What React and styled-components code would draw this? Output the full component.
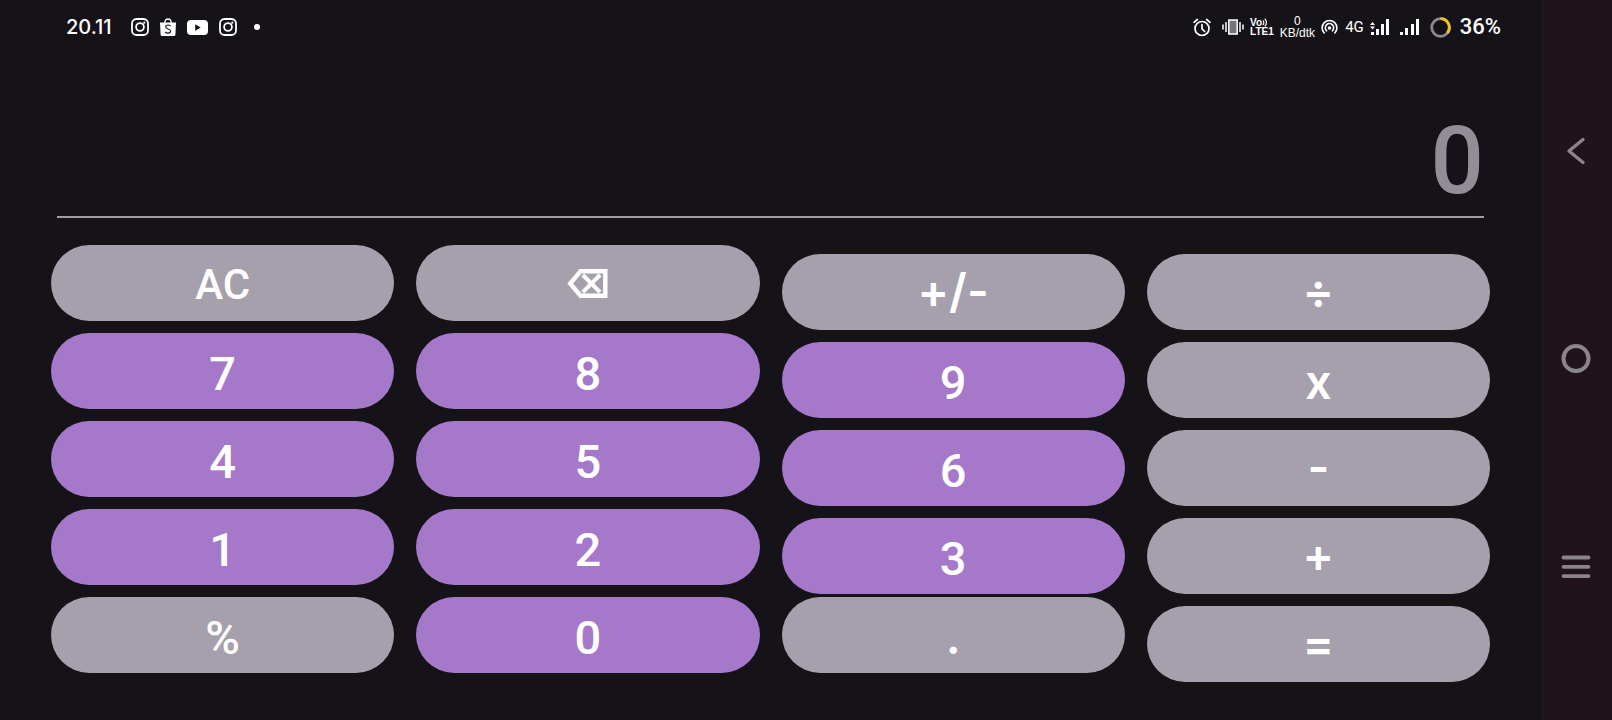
import React, { useState } from "react";
import styled, { createGlobalStyle } from "styled-components";

const GlobalStyle = createGlobalStyle`
  *, *::before, *::after { box-sizing: border-box; }
  body {
    margin: 0;
    background: #151218;
    color: #fff;
    font-family: Roboto, "Liberation Sans", sans-serif;
  }
`;

const Screen = styled.div`
  display: flex;
  min-height: 100vh;
`;

const Calculator = styled.main`
  flex: 1;
  min-width: 0;
  display: flex;
  flex-direction: column;
`;

const StatusBar = styled.header`
  display: flex;
  align-items: center;
  justify-content: space-between;
  height: 54px;
  padding: 0 40px 0 66px;

  svg { display: block; flex: none; }
`;

const StatusGroup = styled.div`
  display: flex;
  align-items: center;
  gap: ${(p) => p.$gap}px;
`;

const Clock = styled.time`
  margin-right: 8px;
  font: 500 20px/24px Inter, sans-serif;
`;

const Battery = styled.span`
  font-size: 22px;
  font-weight: 500;
  line-height: 24px;
`;

const NetworkType = styled.span`
  font-size: 15px;
  line-height: 24px;
`;

const Stack = styled.span`
  display: flex;
  flex-direction: column;
  align-items: ${(p) => p.$align || "center"};
  font-family: "Liberation Sans", sans-serif;
  font-size: ${(p) => p.$size}px;
  line-height: ${(p) => p.$line}px;
  font-weight: ${(p) => p.$weight || 400};
`;

const Voice = styled.span`
  display: flex;
  align-items: center;
`;

const Display = styled.input`
  height: 164px;
  margin: 0 57px;
  padding: 52px 0 0;
  border: 0;
  border-bottom: 2px solid #a09da3;
  border-radius: 0;
  outline: 0;
  background: transparent;
  color: #938d97;
  font: 500 94px/108px Roboto, sans-serif;
  text-align: right;
`;

const Keypad = styled.section`
  display: grid;
  grid-template-columns: repeat(4, 1fr);
  gap: 22px;
  padding: 27px 51px 36px;
`;

const KeyColumn = styled.div`
  display: flex;
  flex-direction: column;
  gap: 12px;
  padding-top: ${(p) => (p.$lowered ? 9 : 0)}px;
`;

const faces = {
  digit: { font: "500 47px/56px Roboto, sans-serif", padding: "6px 0 0" },
  symbol: { font: "600 47px/56px Inter, sans-serif", padding: "0 0 2px" },
  letter: { font: "600 47px/56px Inter, sans-serif", padding: "4px 0 0" },
  label: { font: "500 42px/56px Roboto, sans-serif", padding: "4px 0 0" },
  icon: { font: "500 47px/56px Roboto, sans-serif", padding: "0" },
};

const Key = styled.button`
  display: flex;
  align-items: center;
  justify-content: center;
  height: 76px;
  margin: ${(p) => (p.$raised ? "-9px" : "0")} 0 0;
  padding: ${(p) => faces[p.$face].padding};
  border: 0;
  border-radius: 38px;
  background: ${(p) => (p.$accent ? "#a678ca" : "#a6a0ac")};
  color: #fff;
  font: ${(p) => faces[p.$face].font};
  cursor: pointer;
`;

const NavRail = styled.nav`
  flex: none;
  display: flex;
  flex-direction: column;
  width: 71px;
  padding: 47px 2px 49px 0;
  background: #20131c;
`;

const NavButton = styled.button`
  flex: 1;
  display: flex;
  align-items: center;
  justify-content: center;
  padding: 0;
  border: 0;
  background: transparent;
  color: #8b8488;
  cursor: pointer;
`;

const Instagram = () => (
  <svg width="18" height="18" viewBox="0 0 18 18" fill="none" stroke="#fff" strokeWidth="1.8" aria-hidden="true">
    <rect x="1" y="1" width="16" height="16" rx="4.5" />
    <circle cx="9" cy="9" r="3.9" />
    <circle cx="13.3" cy="4.7" r="1.1" fill="#fff" stroke="none" />
  </svg>
);

const Shop = () => (
  <svg width="16" height="18" viewBox="0 0 16 18" fill="none" aria-hidden="true">
    <path d="M4.8 5C4.8 2.4 6.2 1 8 1s3.2 1.4 3.2 4" stroke="#fff" strokeWidth="1.3" />
    <path d="M0 4.5h16l-.6 12a1.5 1.5 0 0 1-1.5 1.5H2.1a1.5 1.5 0 0 1-1.5-1.5z" fill="#fff" />
    <path d="M10.5 8C9.7 7.2 8.8 7 8 7c-1.4 0-2.3.7-2.3 1.8 0 2.5 4.9 1.7 4.9 4.3 0 1.2-1.1 2-2.5 2-1.2 0-2.2-.4-2.9-1.1" stroke="#151218" strokeWidth="1.1" />
  </svg>
);

const Video = () => (
  <svg width="21" height="15" viewBox="0 0 21 15" aria-hidden="true">
    <rect width="21" height="15" rx="4" fill="#fff" />
    <path d="M8.2 4.3v6.4l5.5-3.2z" fill="#151218" />
  </svg>
);

const Dot = () => (
  <svg width="16" height="6" viewBox="0 0 16 6" aria-hidden="true">
    <circle cx="9" cy="3" r="3" fill="#fff" />
  </svg>
);

const Alarm = () => (
  <svg width="23" height="19" viewBox="0 0 23 19" fill="none" stroke="#fff" strokeWidth="1.7" strokeLinecap="round" aria-hidden="true">
    <circle cx="9" cy="10.5" r="7" />
    <path d="M9 6.5v4.3l2.6 2.6M1 4.3l3.3-2.8M17 4.3l-3.3-2.8" />
  </svg>
);

const Vibrate = () => (
  <svg width="22" height="16" viewBox="0 0 22 16" fill="none" stroke="#fff" strokeWidth="1.5" aria-hidden="true">
    <rect x="6.8" y="1" width="8.4" height="14" fill="#77747a" />
    <path d="M4 3v10M18 3v10M1 5.5v5M21 5.5v5" />
  </svg>
);

const VoiceWaves = () => (
  <svg width="6" height="9" viewBox="0 0 6 9" fill="none" stroke="#fff" strokeWidth="1.2" aria-hidden="true">
    <path d="M.8 2.5a3 3 0 0 1 0 4.5M2.8.7a5.3 5.3 0 0 1 0 7.6" />
  </svg>
);

const Hotspot = () => (
  <svg width="18" height="16" viewBox="0 0 18 16" fill="none" stroke="#fff" strokeWidth="1.6" strokeLinecap="round" aria-hidden="true">
    <path d="M3.2 14a7.4 7.4 0 1 1 10.6 0M5.6 11.8a4.2 4.2 0 1 1 5.8 0" />
    <circle cx="8.5" cy="9" r="1.8" fill="#fff" stroke="none" />
  </svg>
);

const Signal = ({ data }) => (
  <svg width="24" height="18" viewBox="0 0 24 18" fill="#fff" aria-hidden="true">
    <path d={data ? "M1 14h3v3H1zM6 11h3v6H6zM11 6h3v11h-3zM16 1h3v16h-3z" : "M0 14h3v3H0zM5 10h3v7H5zM11 6h3v11h-3zM16 1h3v16h-3z"} />
    {data && <path d="M2.5 4L5 7H0zM2.5 11.5L5 8.5H0z" />}
  </svg>
);

const BatteryRing = () => (
  <svg width="24" height="21" viewBox="0 0 24 21" fill="none" strokeWidth="2.8" aria-hidden="true">
    <circle cx="10.5" cy="10.5" r="8.8" stroke="#8b898e" />
    <path d="M10.5 1.7A8.8 8.8 0 0 1 17.3 16.1" stroke="#f5c21b" />
  </svg>
);

const Backspace = () => (
  <svg width="41" height="29" viewBox="0 0 41 29" fill="none" stroke="#fff" strokeWidth="4.4" aria-hidden="true">
    <path d="M38.3 2.2H13.6L3.2 14.5l10.4 12.3h24.7z" />
    <path d="M15.8 6L33 23.2M33 6L15.8 23.2" strokeWidth="4" />
  </svg>
);

const navIcons = {
  Back: (
    <svg width="20" height="28" viewBox="0 0 20 28" fill="none" stroke="currentColor" strokeWidth="3.4" strokeLinecap="round" strokeLinejoin="round" aria-hidden="true">
      <path d="M17 2.5L3 14l14 11.5" />
    </svg>
  ),
  Home: (
    <svg width="30" height="30" viewBox="0 0 30 30" fill="none" stroke="currentColor" strokeWidth="4" aria-hidden="true">
      <circle cx="15" cy="14.5" r="12.5" />
    </svg>
  ),
  Recent: (
    <svg width="30" height="24" viewBox="0 0 30 24" fill="none" stroke="currentColor" strokeWidth="3.8" strokeLinecap="round" aria-hidden="true">
      <path d="M2.5 2.5h25M2.5 11.8h25M2.5 21.1h25" />
    </svg>
  ),
};

const columns = [
  {
    keys: [
      { text: "AC", face: "label" },
      { text: "7", accent: true },
      { text: "4", accent: true },
      { text: "1", accent: true },
      { text: "%" },
    ],
  },
  {
    keys: [
      { name: "Backspace", icon: <Backspace />, face: "icon" },
      { text: "8", accent: true },
      { text: "5", accent: true },
      { text: "2", accent: true },
      { text: "0", accent: true },
    ],
  },
  {
    lowered: true,
    keys: [
      { text: "+/-", face: "symbol" },
      { text: "9", accent: true },
      { text: "6", accent: true },
      { text: "3", accent: true },
      { text: ".", face: "letter", raised: true },
    ],
  },
  {
    lowered: true,
    keys: [
      { text: "÷", face: "symbol" },
      { text: "x", face: "letter" },
      { text: "-", face: "symbol" },
      { text: "+", face: "symbol" },
      { text: "=", face: "symbol" },
    ],
  },
];

export default function App() {
  const [value, setValue] = useState("0");

  const press = ({ text, accent, name }) => {
    if (text === "AC") setValue("0");
    else if (name === "Backspace") setValue((v) => v.slice(0, -1) || "0");
    else if (accent) setValue((v) => (v === "0" ? text : v + text));
    else if (text === ".") setValue((v) => (v.includes(".") ? v : v + "."));
  };

  return (
    <>
      <GlobalStyle />
      <Screen>
        <Calculator>
          <StatusBar>
            <StatusGroup $gap={11}>
              <Clock>20.11</Clock>
              <Instagram />
              <Shop />
              <Video />
              <Instagram />
              <Dot />
            </StatusGroup>
            <StatusGroup $gap={6}>
              <Alarm />
              <Vibrate />
              <Stack $size={10} $line={9} $weight={700} $align="flex-start">
                <Voice>
                  Vo
                  <VoiceWaves />
                </Voice>
                <span>LTE1</span>
              </Stack>
              <Stack $size={12} $line={12}>
                <span>0</span>
                <span>KB/dtk</span>
              </Stack>
              <Hotspot />
              <NetworkType>4G</NetworkType>
              <Signal data />
              <Signal />
              <BatteryRing />
              <Battery>36%</Battery>
            </StatusGroup>
          </StatusBar>
          <Display aria-label="Result" value={value} readOnly />
          <Keypad>
            {columns.map((column, i) => (
              <KeyColumn key={i} $lowered={column.lowered}>
                {column.keys.map((k) => (
                  <Key
                    key={k.text || k.name}
                    type="button"
                    aria-label={k.name}
                    $face={k.face || "digit"}
                    $accent={k.accent}
                    $raised={k.raised}
                    onClick={() => press(k)}
                  >
                    {k.icon || k.text}
                  </Key>
                ))}
              </KeyColumn>
            ))}
          </Keypad>
        </Calculator>
        <NavRail>
          {Object.entries(navIcons).map(([name, icon]) => (
            <NavButton key={name} type="button" aria-label={name}>
              {icon}
            </NavButton>
          ))}
        </NavRail>
      </Screen>
    </>
  );
}
